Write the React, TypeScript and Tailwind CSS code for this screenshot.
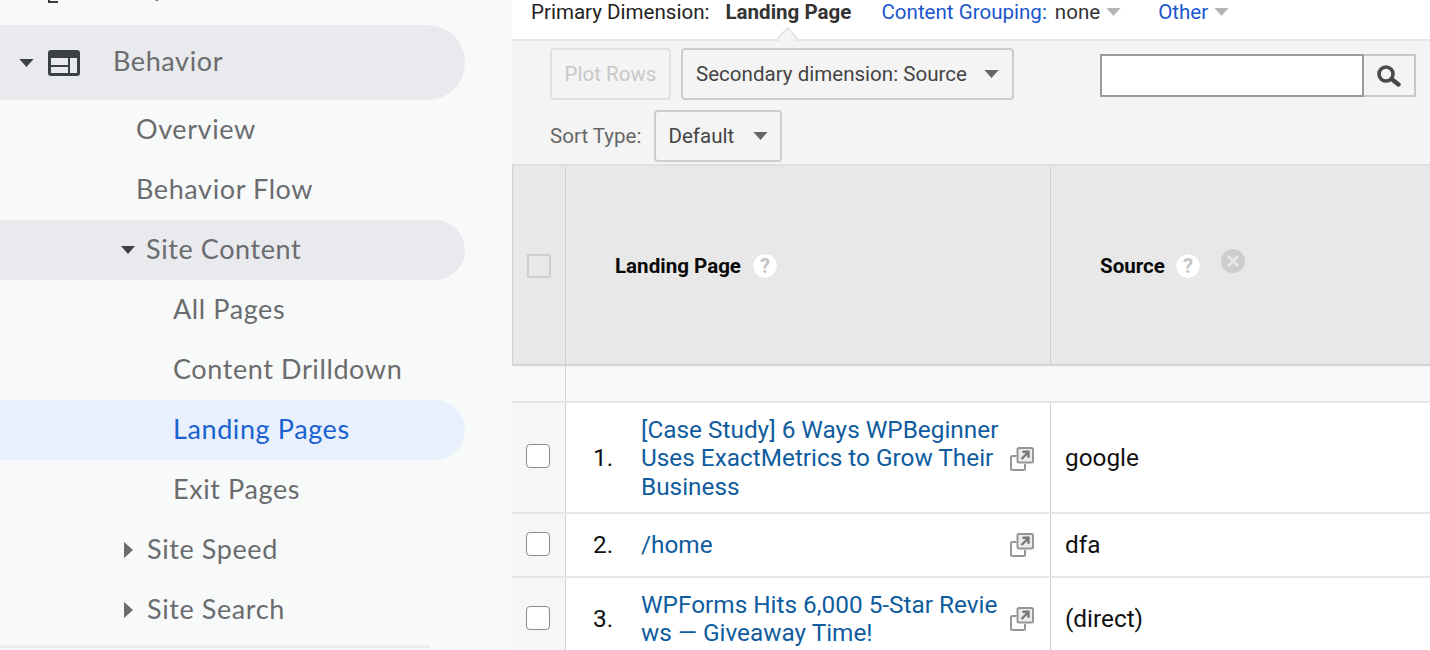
import React from 'react';

const navFont = "font-['Lato',sans-serif] text-[27px] tracking-[0.6px] pb-[2px]";
const tableFont = "font-['Roboto',sans-serif]";
const navGrey = 'text-[#6b6c6e]';

function CaretDown({ className }: { className?: string }) {
  return (
    <svg viewBox="0 0 16 9" className={className} fill="currentColor">
      <path d="M0 0h16L8 9z" />
    </svg>
  );
}

function CaretRight({ className }: { className?: string }) {
  return (
    <svg viewBox="0 0 9 16" className={className} fill="currentColor">
      <path d="M0 0l9 8-9 8z" />
    </svg>
  );
}

function NavRow({ label, indent, active, caret }: { label: string; indent: string; active?: boolean; caret?: 'down' | 'right' }) {
  return (
    <div className={`flex h-[60px] w-[465px] items-center rounded-r-[30px] ${indent} ${active ? 'bg-[#e8f0fe]' : ''}`}>
      {caret === 'right' && <CaretRight className="mr-[14px] h-[16px] w-[9px] text-[#6b6c6e]" />}
      <span className={`${navFont} ${active ? 'text-[#1a62d0]' : navGrey}`}>{label}</span>
    </div>
  );
}

function ExternalIcon() {
  return (
    <svg viewBox="0 0 24 24" className="h-[24px] w-[24px] shrink-0 text-[#969696]" fill="none" stroke="currentColor">
      <path d="M6.5 9H2.5A1.5 1.5 0 0 0 1 10.5v11A1.5 1.5 0 0 0 2.5 23h11a1.5 1.5 0 0 0 1.5-1.5V17" strokeWidth="2" />
      <rect x="7.5" y="1" width="15.5" height="14.5" rx="1.5" strokeWidth="2" fill="#ececec" />
      <path d="M11.5 12l6-6M12.5 4.8h6v6" strokeWidth="2.4" stroke="#777" />
    </svg>
  );
}

function HelpIcon() {
  return (
    <span className={`flex h-[26px] w-[26px] items-center justify-center rounded-full border border-[#e2e2e2] bg-white text-[20px] font-bold text-[#c4c4c4] ${tableFont}`}>?</span>
  );
}

function Row({ n, height, source, children, nudge }: { n: number; height: string; source: string; children: React.ReactNode; nudge?: boolean }) {
  return (
    <div className={`grid grid-cols-[54px_485px_1fr] border-b-2 border-[#e6e6e6] bg-white text-[24.35px] text-[#111] ${height}`}>
      <div className="flex items-center border-r border-[#d0d0d0] bg-[#f6f6f6] pb-[3px] pl-[14px]">
        <span className="h-[24px] w-[24px] rounded-[4px] border border-[#8a8a8a] bg-white" />
      </div>
      <div className={`flex items-center border-r border-[#d0d0d0] pl-[27px] pr-[16px] ${nudge ? 'pt-[2px]' : ''}`}>
        <span className="w-[48px] shrink-0">{n}.</span>
        <div className="flex-1 leading-[28.2px] text-[#0f5c9e]">{children}</div>
        <ExternalIcon />
      </div>
      <div className={`flex items-center pl-[14px] ${nudge ? 'pt-[2px]' : ''}`}>{source}</div>
    </div>
  );
}

export default function App() {
  return (
    <div className="flex h-[650px] w-[1430px] overflow-hidden bg-white">
      {/* left nav */}
      <aside className="relative h-[650px] w-[512px] shrink-0 overflow-hidden bg-[#f8fafa]">
        <div className="-mt-[50px] flex h-[75px] items-center pl-[48px]">
          <svg viewBox="0 0 10 30" className="h-[30px] w-[10px] text-[#3c4043]" fill="currentColor">
            <path d="M0 25h2v3h8v2H0z" />
          </svg>
          <span className={`${navFont} ${navGrey} ml-[55px]`}>Acquisition</span>
        </div>
        <div className="flex h-[75px] w-[465px] items-center rounded-r-[37px] bg-[#e8eaed] pl-[19px]">
          <CaretDown className="h-[8px] w-[15px] text-[#3c4043]" />
          <svg viewBox="0 0 32 26" className="ml-[14px] h-[26px] w-[32px]">
            <rect width="32" height="26" rx="3" fill="#3c4043" />
            <rect x="3" y="8" width="17" height="7" fill="#e8eaed" />
            <rect x="3" y="17" width="17" height="6" fill="#e8eaed" />
            <rect x="22" y="8" width="7" height="15" fill="#e8eaed" />
          </svg>
          <span className={`${navFont} ${navGrey} ml-[33px]`}>Behavior</span>
        </div>
        <NavRow label="Overview" indent="pl-[136px]" />
        <NavRow label="Behavior Flow" indent="pl-[136px]" />
        <div className="flex h-[60px] w-[465px] items-center rounded-r-[30px] bg-[#e8eaed] pl-[121px]">
          <CaretDown className="mr-[11px] h-[8px] w-[14px] text-[#3c4043]" />
          <span className={`${navFont} ${navGrey}`}>Site Content</span>
        </div>
        <NavRow label="All Pages" indent="pl-[173px]" />
        <NavRow label="Content Drilldown" indent="pl-[173px]" />
        <NavRow label="Landing Pages" indent="pl-[173px]" active />
        <NavRow label="Exit Pages" indent="pl-[173px]" />
        <NavRow label="Site Speed" indent="pl-[124px]" caret="right" />
        <NavRow label="Site Search" indent="pl-[124px]" caret="right" />
        <div className="absolute bottom-[2px] left-0 h-[4px] w-[430px] bg-gradient-to-b from-[#f8fafa] to-[#e6e7e8]" />
      </aside>

      {/* report */}
      <main className={`min-w-0 flex-1 ${tableFont}`}>
        <div className="relative flex h-[41px] items-start border-b-2 border-[#e6e6e6] pl-[19px] text-[20.55px] leading-[24px] text-[#222]">
          <span>Primary Dimension:</span>
          <span className="ml-[16px] font-bold text-[#333]">Landing Page</span>
          <span className="ml-[30px] text-[#1a56cc]">Content Grouping:</span>
          <span className="ml-[8px] text-[#333]">none</span>
          <CaretDown className="ml-[6px] mt-[8px] h-[8px] w-[15px] text-[#b5b5b5]" />
          <span className="ml-[37px] text-[#1a56cc]">Other</span>
          <CaretDown className="ml-[6px] mt-[8px] h-[8px] w-[15px] text-[#b5b5b5]" />
          <span className="absolute left-[268px] top-[30px] h-[15px] w-[15px] rotate-45 border-l-2 border-t-2 border-[#e6e6e6] bg-[#f4f4f4]" />
        </div>

        <div className="h-[125px] border-b-2 border-[#e0e0e0] bg-[#f4f4f4] pl-[38px] pt-[7px] text-[20.55px]">
          <div className="flex h-[52px] items-start">
            <button className="flex h-[52px] w-[121px] items-center justify-center rounded-[4px] border-2 border-[#e0e0e0] text-[#c8c8c8]">Plot Rows</button>
            <button className="ml-[10px] flex h-[52px] w-[333px] items-center justify-between rounded-[4px] border-2 border-[#cdcdcd] pl-[13px] pr-[13px] text-[#444]">
              Secondary dimension: Source
              <CaretDown className="h-[8px] w-[15px] text-[#666]" />
            </button>
            <div className="ml-auto mr-[14px] mt-[6px] flex h-[43px]">
              <div className="h-full w-[264px] border-2 border-[#9b9b9b] bg-white" />
              <button className="flex h-full w-[52px] items-center justify-center rounded-r-[2px] border-2 border-l-0 border-[#c8c8c8]">
                <svg viewBox="0 0 26 22" className="h-[22px] w-[26px] text-[#4a4a4a]" fill="none" stroke="currentColor">
                  <circle cx="10" cy="9" r="7" strokeWidth="3.6" />
                  <path d="M15.5 14l7 5.5" strokeWidth="4.4" strokeLinecap="round" />
                </svg>
              </button>
            </div>
          </div>
          <div className="mt-[10px] flex items-center">
            <span className="text-[#666]">Sort Type:</span>
            <button className="ml-[13px] flex h-[52px] w-[128px] items-center justify-between rounded-[4px] border-2 border-[#cdcdcd] pl-[12px] pr-[12px] text-[#444]">
              Default
              <CaretDown className="h-[8px] w-[15px] text-[#666]" />
            </button>
          </div>
        </div>

        <div className="grid h-[200px] grid-cols-[54px_485px_1fr] border-b-2 border-[#d4d4d4] bg-[#e8e8e8] text-[20.55px] font-bold text-[#0a0a0a]">
          <div className="flex items-center border-r border-l border-[#d0d0d0] pl-[14px] pt-[2px]">
            <span className="h-[24px] w-[24px] border-2 border-[#cfcfcf]" />
          </div>
          <div className="flex items-center gap-[11px] border-r border-[#d0d0d0] pl-[49px] pt-[2px]">
            Landing Page
            <HelpIcon />
          </div>
          <div className="flex items-center pl-[49px] pt-[2px]">
            Source
            <span className="ml-[10px]"><HelpIcon /></span>
            <span className="relative ml-[20px] -top-[5px] flex h-[24px] w-[24px] items-center justify-center rounded-full bg-[#cdcdcd]">
              <svg viewBox="0 0 12 12" className="h-[12px] w-[12px]" stroke="#e8e8e8" strokeWidth="2.6">
                <path d="M1 1l10 10M11 1L1 11" />
              </svg>
            </span>
          </div>
        </div>

        <div className="grid h-[37px] grid-cols-[54px_1fr] border-b-2 border-[#e6e6e6] bg-[#f8f8f8]">
          <div className="border-r border-[#d0d0d0]" />
          <div />
        </div>

        <Row n={1} height="h-[111px]" source="google" nudge>
          [Case Study] 6 Ways WPBeginner<br />Uses ExactMetrics to Grow Their<br />Business
        </Row>
        <Row n={2} height="h-[64px]" source="dfa">/home</Row>
        <Row n={3} height="h-[84px]" source="(direct)">
          WPForms Hits 6,000 5-Star Revie<br />ws — Giveaway Time!
        </Row>
      </main>
    </div>
  );
}
